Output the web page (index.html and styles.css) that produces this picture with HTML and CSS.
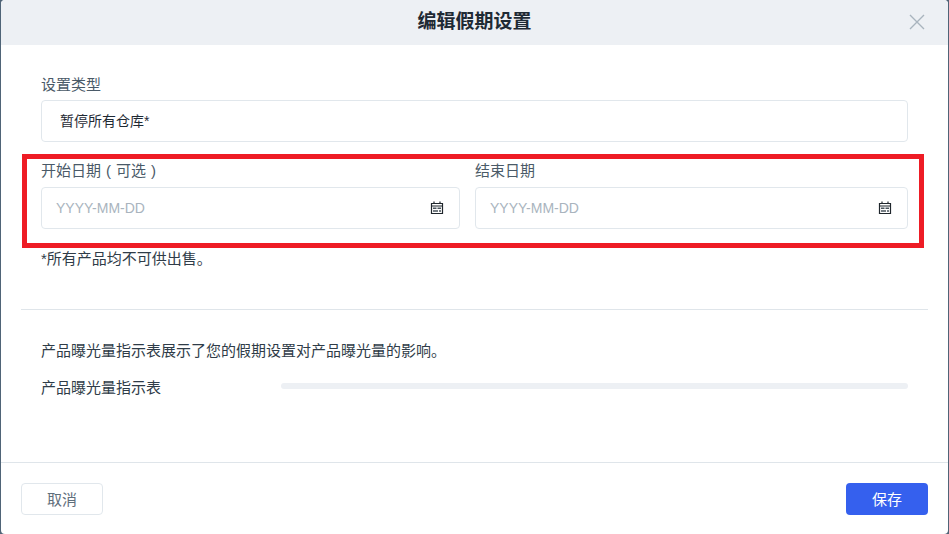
FILE: index.html
```html
<!DOCTYPE html>
<html lang="zh-CN">
<head>
    <meta charset="UTF-8">
    <title>编辑假期设置</title>
    <link rel="stylesheet" href="styles.css">
</head>
<body>
    <div class="modal">
        <header class="modal-header">
            <h1 class="modal-title">编辑假期设置</h1>
            <svg class="modal-close" width="16" height="16" viewBox="0 0 16 16">
                <path d="M1 1L15 15M15 1L1 15" fill="none" stroke="#a9b4be" stroke-width="1.4"/>
            </svg>
        </header>

        <div class="modal-body">
            <section class="form-section">
                <label class="field-label">设置类型</label>
                <div class="input type-input">暂停所有仓库*</div>

                <div class="date-row">
                    <div class="date-field">
                        <label class="field-label">开始日期<span class="paren">(</span>可选<span class="paren">)</span></label>
                        <div class="input date-input">
                            <span class="placeholder">YYYY-MM-DD</span>
                            <svg class="calendar-icon" width="14" height="14" viewBox="0 0 14 14">
                                <path d="M1.500 2.500H12.500V12.500H1.500Z M1.500 5H12.500" fill="none" stroke="#1f262c" stroke-width="1.2"/>
                                <path d="M4 0.500V3M10 0.500V3" fill="none" stroke="#1f262c" stroke-width="1.2"/>
                                <path d="M3 6.500H6.500V8H3Z M7.500 6.500H11V8H7.500Z M3 9.200H8V10.700H3Z M9 9.200H11V10.700H9Z" fill="#4a545c"/>
                            </svg>
                        </div>
                    </div>
                    <div class="date-field">
                        <label class="field-label">结束日期</label>
                        <div class="input date-input">
                            <span class="placeholder">YYYY-MM-DD</span>
                            <svg class="calendar-icon" width="14" height="14" viewBox="0 0 14 14">
                                <path d="M1.500 2.500H12.500V12.500H1.500Z M1.500 5H12.500" fill="none" stroke="#1f262c" stroke-width="1.2"/>
                                <path d="M4 0.500V3M10 0.500V3" fill="none" stroke="#1f262c" stroke-width="1.2"/>
                                <path d="M3 6.500H6.500V8H3Z M7.500 6.500H11V8H7.500Z M3 9.200H8V10.700H3Z M9 9.200H11V10.700H9Z" fill="#4a545c"/>
                            </svg>
                        </div>
                    </div>
                </div>

                <p class="note">*所有产品均不可供出售。</p>
            </section>

            <hr class="divider">

            <section class="exposure-section">
                <p class="exposure-text">产品曝光量指示表展示了您的假期设置对产品曝光量的影响。</p>
                <div class="meter-row">
                    <span class="meter-label">产品曝光量指示表</span>
                    <div class="meter"></div>
                </div>
            </section>
        </div>

        <footer class="modal-footer">
            <button class="btn btn-cancel">取消</button>
            <button class="btn btn-save">保存</button>
        </footer>

        <!-- 截图上的红色标注框 -->
        <div class="highlight-box"></div>
    </div>
</body>
</html>
```

FILE: styles.css
```css
html, body {
    margin: 0;
    padding: 0;
    width: 100%;
    height: 100%;
    overflow: hidden;
    background: #4f6477;
}

body {
    font-family: "Liberation Sans", "Noto Sans CJK SC", sans-serif;
    font-size: 15px;
    color: #2f3c48;
}

.modal {
    position: relative;
    display: flex;
    flex-direction: column;
    width: 947px;
    height: 534px;
    margin-left: 1px;
    background: #ffffff;
    border-radius: 4px;
    overflow: hidden;
}

.modal-header {
    display: flex;
    align-items: center;
    justify-content: center;
    position: relative;
    height: 45px;
    flex-shrink: 0;
    background: #edf0f4;
}

.modal-title {
    margin: 0 0 2px;
    font-size: 19px;
    line-height: 43px;
    font-weight: 700;
    color: #1f2a34;
}

.modal-close {
    position: absolute;
    top: 14px;
    right: 23px;
}

.modal-body {
    flex: 1;
}

.form-section {
    padding: 30px 40px 0;
}

.field-label {
    display: block;
    height: 20px;
    line-height: 20px;
    color: #4a5a68;
}

.paren {
    display: inline-block;
    width: 15px;
    text-align: center;
}

.input {
    display: flex;
    align-items: center;
    justify-content: space-between;
    height: 42px;
    box-sizing: border-box;
    border: 1px solid #e1e7ec;
    border-radius: 4px;
    background: #ffffff;
}

.type-input {
    margin-top: 5px;
    padding-left: 18px;
    padding-bottom: 2px;
    font-size: 14px;
    color: #1f2a34;
}

.date-row {
    display: grid;
    grid-template-columns: 419px 1fr;
    gap: 15px;
    margin-top: 19px;
}

.date-row .input {
    margin-top: 6px;
    padding: 0 15px 0 14px;
}

.placeholder {
    font-size: 14px;
    color: #a9b4be;
}

.calendar-icon {
    flex-shrink: 0;
}

.note {
    margin: 20px 0 0;
    line-height: 20px;
    color: #2f3c48;
}

.divider {
    height: 1px;
    margin: 40px 20px 0;
    border: 0;
    background: #dfe5ea;
}

.exposure-section {
    padding: 0 40px;
}

.exposure-text {
    margin: 31px 0 0;
    line-height: 20px;
}

.meter-row {
    display: flex;
    align-items: center;
    margin-top: 15px;
    height: 20px;
}

.meter-label {
    width: 240px;
    flex-shrink: 0;
}

.meter {
    flex: 1;
    height: 6px;
    border-radius: 3px;
    background: #edf0f4;
}

.modal-footer {
    display: flex;
    align-items: flex-start;
    justify-content: space-between;
    height: 72px;
    box-sizing: border-box;
    padding: 20px 20px 0;
    border-top: 1px solid #dfe5ea;
}

.btn {
    width: 82px;
    height: 32px;
    box-sizing: border-box;
    border-radius: 4px;
    font-family: inherit;
    font-size: 15px;
    padding: 0 0 2px;
}

.btn-cancel {
    border: 1px solid #e1e7ec;
    background: #ffffff;
    color: #5f6e7b;
}

.btn-save {
    border: 0;
    background: #3560ee;
    color: #ffffff;
}

.highlight-box {
    position: absolute;
    top: 154px;
    left: 21px;
    width: 892px;
    height: 84px;
    border: 5px solid #ee1c25;
}
```
